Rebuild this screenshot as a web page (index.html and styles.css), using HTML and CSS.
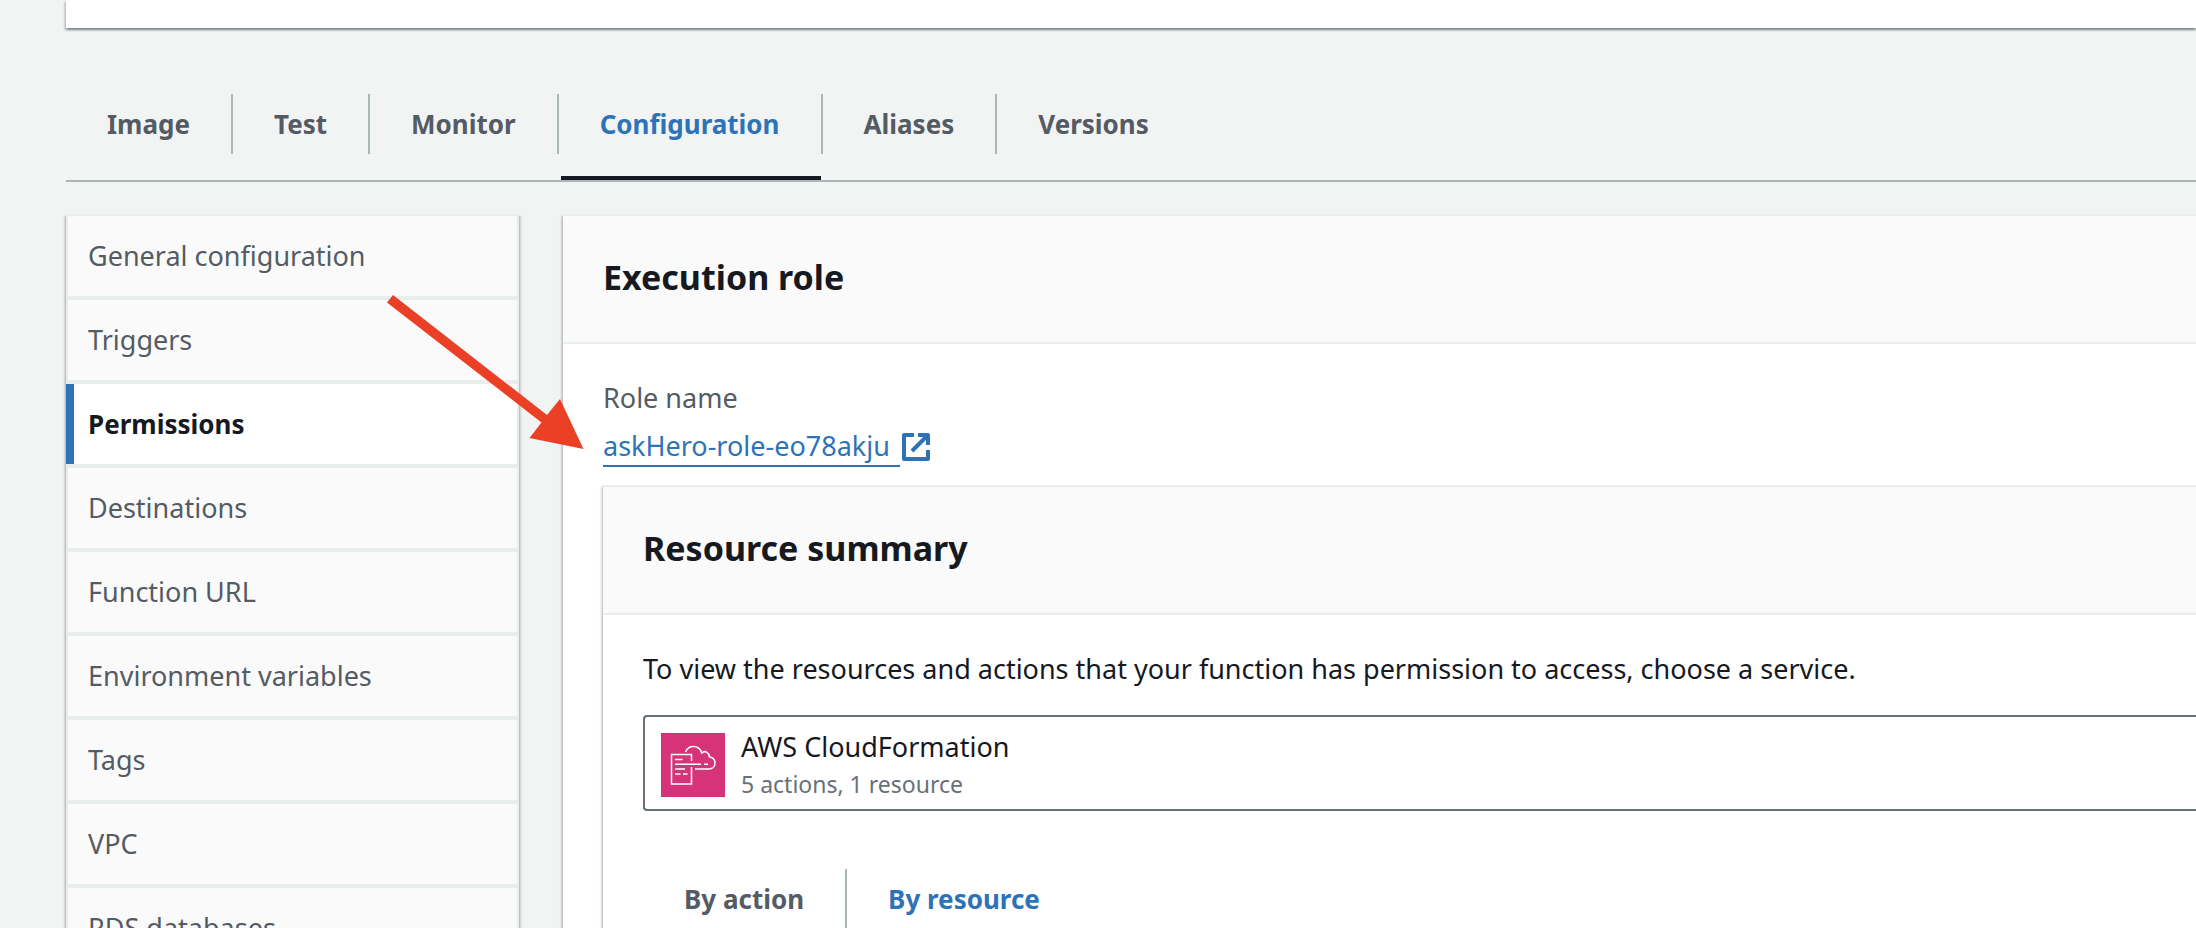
FILE: index.html
```html
<!DOCTYPE html>
<html lang="en">
<head>
<meta charset="utf-8">
<meta name="viewport" content="width=device-width, initial-scale=1">
<title>Lambda function configuration</title>
<link rel="stylesheet" href="styles.css">
</head>
<body>
<div class="page">
  <section class="overview" aria-label="Function overview"></section>

  <nav class="tabs" aria-label="Function sections">
    <button class="tab" type="button"><span class="tab-label">Image</span></button>
    <button class="tab" type="button"><span class="tab-label">Test</span></button>
    <button class="tab" type="button"><span class="tab-label">Monitor</span></button>
    <button class="tab tab-active" type="button" aria-current="page"><span class="tab-label">Configuration</span></button>
    <button class="tab" type="button"><span class="tab-label">Aliases</span></button>
    <button class="tab" type="button"><span class="tab-label">Versions</span></button>
  </nav>

  <div class="columns">
    <nav class="side" aria-label="Configuration">
      <a class="side-item" href="#general">General configuration</a>
      <a class="side-item" href="#triggers">Triggers</a>
      <a class="side-item side-active" href="#permissions" aria-current="page">Permissions</a>
      <a class="side-item" href="#destinations">Destinations</a>
      <a class="side-item" href="#url">Function URL</a>
      <a class="side-item" href="#environment">Environment variables</a>
      <a class="side-item" href="#tags">Tags</a>
      <a class="side-item" href="#vpc">VPC</a>
      <a class="side-item" href="#rds">RDS databases</a>
    </nav>

    <main class="panel">
      <header class="panel-header"><h2 class="panel-title">Execution role</h2></header>
      <div class="role">
        <div class="role-label">Role name</div>
        <a class="role-link" href="#role"><span class="role-name">askHero-role-eo78akju</span><svg class="external" viewBox="0 0 28 28" aria-hidden="true"><path d="M12 2H2V26H26V17M16 2H26V12M25 3L10 18" fill="none" stroke="currentColor" stroke-width="4" stroke-linejoin="round"/></svg></a>
        <section class="panel summary">
          <header class="panel-header"><h2 class="panel-title">Resource summary</h2></header>
          <div class="summary-body">
            <p class="hint" id="hint">To view the resources and actions that your function has permission to access, choose a service.</p>
            <button class="service" type="button" aria-haspopup="listbox" aria-describedby="hint">
              <svg class="service-icon" viewBox="0 0 64 64" aria-hidden="true">
                <rect width="64" height="64" fill="#d63378"/>
                <g fill="none" stroke="#fff" stroke-width="1.5">
                  <path d="M30.500 28v-6.500H10.500v29.500h20V34M14 26.500h7.500M14 31.300h26M43 31.300h4M14 36h10M14 41h5.500M22 41h4.500"/>
                  <path d="M24.500 19C26 15.500 29 13.500 32.500 13.500C36.500 13.500 39.500 16 40.800 20C44 17 48 19.500 48.300 23.700C52 24.500 54 26.700 54 29.800C54 33.500 51.500 36 48 36H34"/>
                </g>
              </svg>
              <span class="service-text">
                <span class="service-name">AWS CloudFormation</span>
                <span class="service-meta">5 actions, 1 resource</span>
              </span>
            </button>
            <div class="tabs subtabs">
              <button class="tab" type="button"><span class="tab-label">By action</span></button>
              <button class="tab subtab-active" type="button"><span class="tab-label">By resource</span></button>
            </div>
          </div>
        </section>
      </div>
      <svg class="arrow" viewBox="0 0 200 156" aria-hidden="true"><path d="M9 1L163 121L176 105L199.500 155L145.500 144L157.500 128.500L3 8.500Z" fill="#eb4025"/></svg>
    </main>
  </div>
</div>
</body>
</html>
```
FILE: styles.css
```css
* { box-sizing: border-box; }

body {
  margin: 0;
  background: #f2f4f3;
  color: #16191f;
  font-family: "Noto Sans", "Open Sans", sans-serif;
  font-size: 27px;
  line-height: 36px;
}

.page {
  height: 100vh;
  overflow: hidden;
  padding-left: 66px;
}

button {
  font: inherit;
  color: inherit;
  background: none;
  border: 0;
  padding: 0;
  text-align: left;
}

.overview,
.side,
.panel {
  box-shadow:
    0 2px 2px rgba(0, 28, 36, 0.3),
    2px 2px 2px rgba(0, 28, 36, 0.15),
    -2px 2px 2px rgba(0, 28, 36, 0.15);
}

.overview {
  height: 28px;
  background: #fff;
}

.tabs {
  display: flex;
  margin-top: 40px;
  border-bottom: 2px solid #aab7b8;
}

.tab {
  position: relative;
  padding: 26px 0;
  color: #545b64;
  font-size: 26px;
  font-weight: 700;
}

.tab-label {
  display: block;
  padding: 12px 41px;
  border-right: 2px solid #aab7b8;
}

.tab:last-child .tab-label { border-right-color: transparent; }

.tab-active, .subtab-active { color: #2e73b8; }

.tab-active::after {
  content: "";
  position: absolute;
  right: 2px;
  bottom: 0;
  left: 2px;
  height: 4px;
  background: #16191f;
}

.columns {
  display: grid;
  grid-template-columns: 453px minmax(0, 1fr);
  gap: 44px;
  margin-top: 32px;
}

.side {
  display: flex;
  flex-direction: column;
  gap: 4px;
  padding: 2px 2px 0;
  background: #eaeded;
}

.side-item {
  padding: 22px 20px;
  color: #545b64;
  background: #fafafa;
  text-decoration: none;
}

.side-active {
  margin-left: -2px;
  padding-left: 14px;
  border-left: 8px solid #2e73b8;
  background: #fff;
  color: #16191f;
  font-size: 26px;
  font-weight: 700;
}

.panel {
  position: relative;
  border-top: 2px solid #eaeded;
  background: #fff;
}

.panel-header {
  padding: 38px 40px 42px;
  border-bottom: 2px solid #eaeded;
  background: #fafafa;
}

.panel-title {
  margin: 0;
  font-size: 34px;
  line-height: 46px;
}

.role { padding: 36px 0 0 40px; }
.role-label { color: #545b64; }

.role-link {
  display: flex;
  align-items: center;
  gap: 2px;
  margin-top: 11px;
  color: #2e73b8;
  text-decoration: none;
}

.role-name {
  padding: 0 10px 0 0;
  line-height: 38px;
  border-bottom: 2px solid #2e73b8;
}

.external { width: 28px; height: 28px; }

.summary { margin-top: 18px; }
.summary-body { padding: 36px 0 60px 40px; }
.hint { margin: 0; white-space: nowrap; }

.service {
  display: flex;
  align-items: center;
  gap: 16px;
  width: 100%;
  margin-top: 28px;
  padding: 14px 16px 10px;
  border: 2px solid #687078;
  border-right: 0;
  border-radius: 4px 0 0 4px;
}

.service-icon { width: 64px; height: 64px; }
.service-text { display: grid; gap: 6px; }
.service-name { line-height: 32px; }
.service-meta { color: #687078; font-size: 23px; line-height: 30px; }
.subtabs { margin-top: 32px; }

.arrow {
  position: absolute;
  top: 78px;
  left: -179px;
  width: 200px;
  height: 156px;
}
```
